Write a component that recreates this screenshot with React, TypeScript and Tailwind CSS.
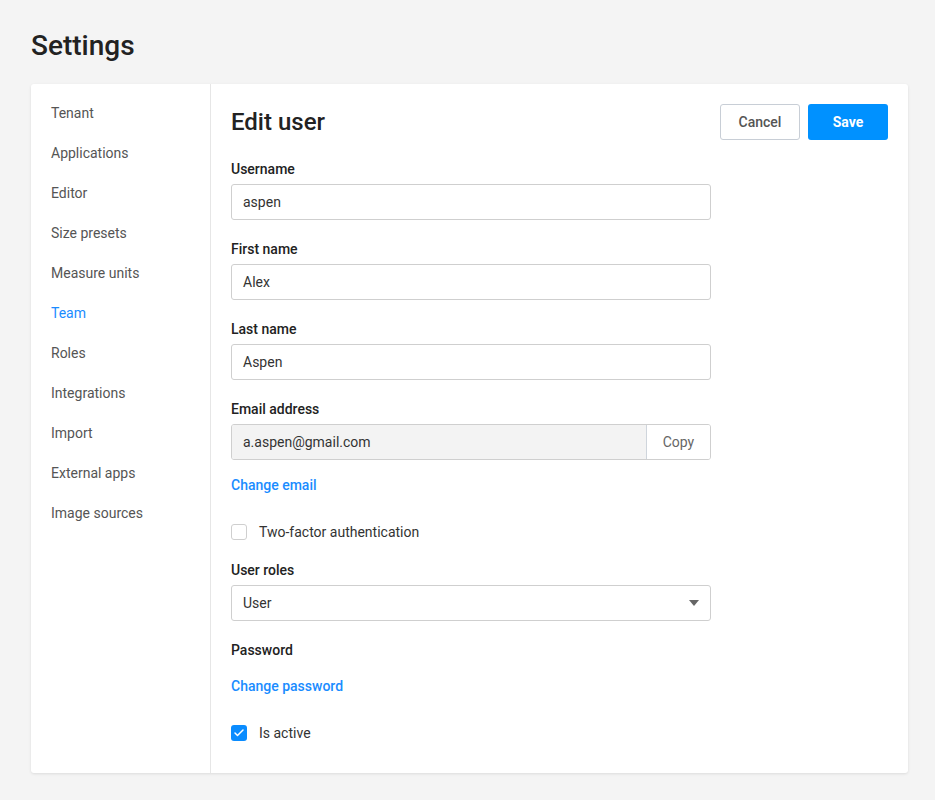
import { Check } from "lucide-react";

const navItems = [
  "Tenant",
  "Applications",
  "Editor",
  "Size presets",
  "Measure units",
  "Team",
  "Roles",
  "Integrations",
  "Import",
  "External apps",
  "Image sources",
];

function Field({ label, value }: { label: string; value: string }) {
  return (
    <div className="mb-[19px]">
      <div className="h-5 leading-5 text-[14px] font-medium text-[#222]">{label}</div>
      <div className="mt-[5px] h-9 w-[480px] rounded-[3px] border border-[#cfcfcf] bg-white px-[11px] flex items-center text-[14px] text-[#333]">
        {value}
      </div>
    </div>
  );
}

export default function App() {
  return (
    <div
      className="min-h-[800px] bg-[#f4f4f4] px-[31px] pt-[27px] pb-[26px]"
      style={{ fontFamily: "Roboto, 'Liberation Sans', sans-serif" }}
    >
      <h1 className="h-[38px] leading-[38px] text-[28px] font-medium text-[#222]">Settings</h1>

      <div className="mt-[19px] w-[877px] h-[689px] flex bg-white rounded-[3px] shadow-[0_1px_3px_rgba(0,0,0,0.1)]">
        {/* Sidebar */}
        <nav className="w-[180px] shrink-0 border-r border-[#e6e6e6] pt-[9px] pl-5">
          {navItems.map((item) => (
            <div
              key={item}
              className={`h-10 leading-10 text-[14px] ${item === "Team" ? "text-[#1a8cff]" : "text-[#555]"}`}
            >
              {item}
            </div>
          ))}
        </nav>

        {/* Main */}
        <div className="flex-1 pl-5 pr-5 pt-5">
          <div className="flex items-center justify-between h-9">
            <h2 className="text-[24px] font-medium text-[#222]">Edit user</h2>
            <div className="flex gap-2">
              <button className="w-20 h-9 rounded-[3px] border border-[#c8ced6] bg-white text-[14px] font-medium text-[#555]">
                Cancel
              </button>
              <button className="w-20 h-9 rounded-[3px] bg-[#0091ff] text-[14px] font-bold text-white">
                Save
              </button>
            </div>
          </div>

          <div className="mt-[19px]">
            <Field label="Username" value="aspen" />
            <Field label="First name" value="Alex" />
            <Field label="Last name" value="Aspen" />

            <div>
              <div className="h-5 leading-5 text-[14px] font-medium text-[#222]">Email address</div>
              <div className="mt-[5px] h-9 w-[480px] rounded-[3px] border border-[#cfcfcf] flex overflow-hidden text-[14px]">
                <div className="flex-1 bg-[#f3f3f3] px-[11px] flex items-center text-[#333]">a.aspen@gmail.com</div>
                <div className="w-16 border-l border-[#cfd5dc] bg-white flex items-center justify-center text-[#666]">
                  Copy
                </div>
              </div>
              <div className="mt-[15px] h-5 leading-5 text-[14px] font-medium text-[#1a8cff]">Change email</div>
            </div>

            <label className="mt-[27px] h-5 flex items-center gap-3 text-[14px] text-[#333]">
              <span className="w-4 h-4 rounded-[3px] border border-[#cfcfcf] bg-white" />
              Two-factor authentication
            </label>

            <div className="mt-[18px]">
              <div className="h-5 leading-5 text-[14px] font-medium text-[#222]">User roles</div>
              <div className="mt-[5px] h-9 w-[480px] rounded-[3px] border border-[#cfcfcf] bg-white pl-[11px] pr-[11px] flex items-center justify-between text-[14px] text-[#333]">
                <span>User</span>
                <svg width="10" height="6" viewBox="0 0 10 6">
                  <path d="M0 0 L10 0 L5 6 Z" fill="#666" />
                </svg>
              </div>
            </div>

            <div className="mt-[19px] h-5 leading-5 text-[14px] font-medium text-[#222]">Password</div>
            <div className="mt-4 h-5 leading-5 text-[14px] font-medium text-[#1a8cff]">Change password</div>

            <label className="mt-[27px] h-5 flex items-center gap-3 text-[14px] text-[#333]">
              <span className="w-4 h-4 rounded-[3px] bg-[#0a8cff] flex items-center justify-center">
                <Check size={12} strokeWidth={3} color="white" />
              </span>
              Is active
            </label>
          </div>
        </div>
      </div>
    </div>
  );
}
